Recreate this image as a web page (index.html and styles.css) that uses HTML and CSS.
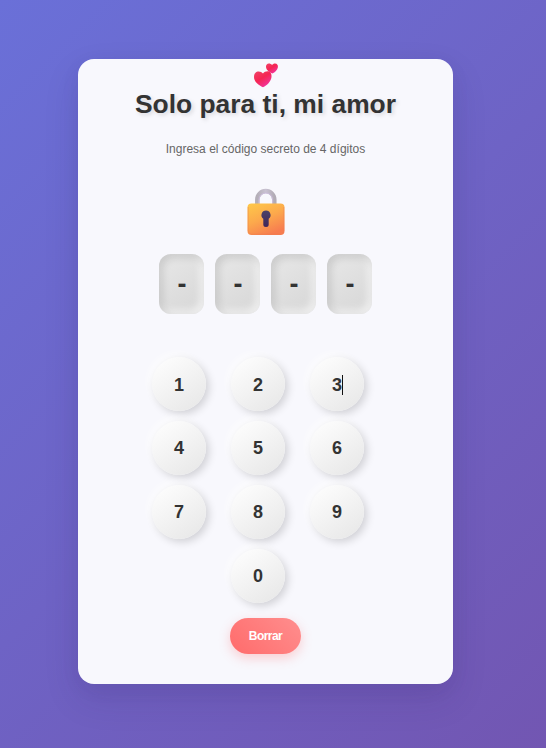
FILE: index.html
```html
<!DOCTYPE html>
<html lang="es">
<head>
<meta charset="utf-8">
<title>Solo para ti, mi amor</title>
<link rel="stylesheet" href="styles.css">
</head>
<body>
<main class="card">
  <svg class="hearts" viewBox="0 0 26 26" aria-hidden="true">
    <defs>
      <linearGradient id="heart" x1="0" y1="0" x2=".7" y2="1"><stop offset="0" stop-color="#f04468"/><stop offset=".5" stop-color="#f52553"/><stop offset="1" stop-color="#f235a2"/></linearGradient>
    </defs>
    <path fill="url(#heart)" d="M10 24.300C6 22.500 1 18.800 1 14C1 10.500 3 8.500 5.700 8.500C7.500 8.500 8.900 9.300 10 10.500C11.100 9.200 12.600 8.300 14.500 8.300C17.400 8.300 18.900 10.800 18.500 14C17.900 18.700 14 22.500 10 24.300Z"/>
    <path fill="url(#heart)" d="M19.400 10.500C16.500 9.400 13.200 7 13 4C12.900 2 14.100 .5 15.900 .5C17.200 .5 18.200 1 19 2C19.700 1 20.700 .4 22 .4C24.200 .4 25.200 2.200 24.900 4.200C24.500 7 21.900 9.300 19.400 10.500Z"/>
  </svg>
  <h1 class="title">Solo para ti, mi amor</h1>
  <p class="hint">Ingresa el código secreto de 4 dígitos</p>
  <svg class="lock" viewBox="0 0 38 48" aria-hidden="true">
    <defs>
      <linearGradient id="body" x1=".1" y1="0" x2=".6" y2="1"><stop offset="0" stop-color="#fec74a"/><stop offset=".5" stop-color="#fca94c"/><stop offset="1" stop-color="#f77c50"/></linearGradient>
      <linearGradient id="shackle"><stop offset="0" stop-color="#b4afb8"/><stop offset=".5" stop-color="#c9c2d2"/><stop offset="1" stop-color="#b2acb6"/></linearGradient>
      <linearGradient id="keyhole" x2="0" y2="1"><stop offset="0" stop-color="#4c4268"/><stop offset="1" stop-color="#40265a"/></linearGradient>
    </defs>
    <path d="M10.300 18V11.600a8.500 8.500 0 0 1 17 0V18" fill="none" stroke="url(#shackle)" stroke-width="4.500"/>
    <path d="M12 16V11.800a6.800 6.800 0 0 1 13.600 0V16" fill="none" stroke="#cbbcdb" stroke-width="1"/>
    <rect x=".5" y="15.500" width="37" height="31.500" rx="4" fill="url(#body)"/>
    <path d="M1.200 19V42.500Q1.200 46.300 5 46.300H33Q36.800 46.300 36.800 42.500V19" fill="none" stroke="#ef7e50" stroke-opacity=".45"/>
    <path d="M19 22.500a4.600 4.600 0 0 0-2.700 8.300V36.500q0 2.500 2.700 2.500T21.700 36.500V30.800A4.600 4.600 0 0 0 19 22.500Z" fill="url(#keyhole)"/>
  </svg>
  <div class="code">
    <span class="slot">-</span><span class="slot">-</span><span class="slot">-</span><span class="slot">-</span>
  </div>
  <div class="keypad">
    <button class="key key-top">1</button><button class="key key-top">2</button><button class="key key-top key-caret">3</button>
    <button class="key">4</button><button class="key">5</button><button class="key">6</button>
    <button class="key">7</button><button class="key">8</button><button class="key">9</button>
    <button class="key key-zero">0</button>
  </div>
  <button class="clear">Borrar</button>
</main>
</body>
</html>
```
FILE: styles.css
```css
* { box-sizing: border-box; }

body {
  margin: 0;
  height: 748px;
  padding: 59px 0 0 78px;
  overflow: hidden;
  font-family: "Liberation Sans", Arial, sans-serif;
  background: linear-gradient(135deg, #6a70d8 0%, #7256b2 100%);
}

.card {
  display: flex;
  flex-direction: column;
  align-items: center;
  width: 375px;
  height: 625px;
  padding-top: 4px;
  border-radius: 16px;
  background: #f8f8fd;
  box-shadow: 0 15px 35px rgba(50, 30, 90, .13), 0 5px 20px rgba(50, 30, 90, .05);
}

.hearts { width: 26px; height: 26px; flex: none; }

.title {
  margin: 0;
  font-size: 26.4px;
  line-height: 30px;
  white-space: nowrap;
  color: #333;
  text-shadow: 2px 2px 4px rgba(0, 0, 0, .13);
}

.hint {
  margin: 22px 0 0;
  font-size: 12px;
  line-height: 16px;
  color: #666;
}

.lock { width: 38px; height: 48px; margin-top: 31px; flex: none; }

.code { display: flex; gap: 11px; margin-top: 18px; }

.slot {
  display: flex;
  align-items: center;
  justify-content: center;
  width: 45px;
  height: 60px;
  padding-left: 1px;
  border-radius: 12px;
  font-size: 27px;
  font-weight: bold;
  color: #333;
  background: linear-gradient(145deg, #e8e8e8, #d6d6d6);
  box-shadow: inset 3px 3px 8px rgba(0, 0, 0, .14), inset -3px -3px 8px rgba(255, 255, 255, .75);
}

.keypad {
  display: grid;
  grid-template-columns: repeat(3, 54px);
  gap: 10px 25px;
  margin: 43px 16px 0 0;
}

.key {
  display: flex;
  align-items: center;
  justify-content: center;
  width: 54px;
  height: 54px;
  padding: 0 0 0 1px;
  border: 0;
  border-radius: 50%;
  font: bold 18px "Liberation Sans", Arial, sans-serif;
  color: #333;
  background: linear-gradient(145deg, #fff, #e6e6e6);
  box-shadow: 3px 3px 8px rgba(0, 0, 0, .16), -3px -3px 8px rgba(255, 255, 255, .8);
}

.key-top { padding-top: 2px; }

.key-zero { grid-column: 2; }

.key-caret::after {
  content: "";
  width: 1px;
  height: 20px;
  margin-right: -1px;
  background: #111;
}

.clear {
  width: 71px;
  height: 36px;
  margin-top: 15px;
  padding: 0;
  border: 0;
  border-radius: 18px;
  font: bold 12px "Liberation Sans", Arial, sans-serif;
  letter-spacing: -.55px;
  color: #fff;
  background: linear-gradient(45deg, #ff6b6b, #ff8e8e);
  box-shadow: 0 4px 12px rgba(255, 107, 107, .3);
}
```
